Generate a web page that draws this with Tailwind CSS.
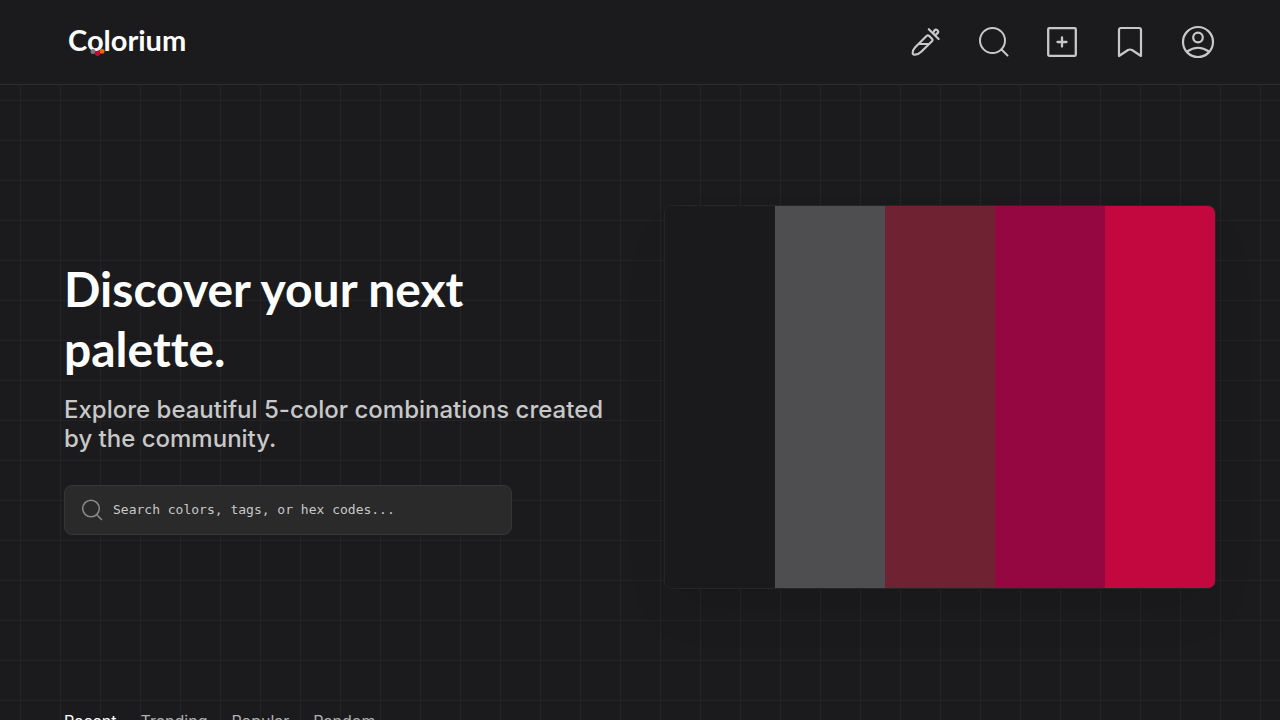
<!DOCTYPE html>
<html lang="en">
<head>
  <meta charset="UTF-8" />
  <meta name="viewport" content="width=device-width, initial-scale=1" />
  <title>Colorium</title>
  <script src="https://cdn.jsdelivr.net/npm/@tailwindcss/browser@4"></script>
</head>
<body class="min-h-screen overflow-x-hidden bg-[#1b1b1d] bg-[linear-gradient(to_right,#232325_1px,transparent_1px),linear-gradient(to_bottom,#232325_1px,transparent_1px)] bg-size-[40px_40px] bg-position-[20px_20px] font-[Inter,sans-serif] text-white">

  <!-- Header -->
  <header class="flex h-[85px] items-center justify-between border-b border-[#2d2d2f] bg-[#1b1b1d] px-16">
    <a href="#" class="relative pb-1 pl-1 font-[Lato,sans-serif] text-[29px] font-bold leading-8">
      Colorium
      <svg class="absolute left-[26px] top-6 h-2 w-4" viewBox="0 0 16 8" aria-hidden="true">
        <circle cx="3" cy="3.500" r="2.500" fill="#77777a" />
        <circle cx="12" cy="3.200" r="2.500" fill="#e8650c" />
        <circle cx="7.500" cy="5.300" r="2.600" fill="#c3073f" />
      </svg>
    </a>

    <nav class="flex items-center gap-8 text-[#c8c8c8]">
      <button aria-label="Color picker">
        <svg class="size-9" viewBox="0 0 36 36" fill="none" stroke="currentColor" stroke-width="2.200" stroke-linecap="round" stroke-linejoin="round">
          <path d="M18.500 12 7 23.500Q4.500 26 4.700 29.500Q5 31 7 30.700Q10.500 30.500 13.500 27.500L24.200 17Q25 16 24.200 15L21 11.800Q19.800 11 18.500 12Z" />
          <path d="M11 20h9.500M20.800 5.200l9.800 9.800" />
          <path d="m25 9.200 1.300-2.500q1.300-1.700 3-.5 1.700 1.500.3 3l-2.300 2" />
        </svg>
      </button>
      <button aria-label="Search">
        <svg class="size-9" viewBox="0 0 36 36" fill="none" stroke="currentColor" stroke-width="2" stroke-linecap="round">
          <circle cx="16.500" cy="16.500" r="12.500" /><path d="m25.500 25.500 6 6" />
        </svg>
      </button>
      <button aria-label="Create palette">
        <svg class="size-9" viewBox="0 0 36 36" fill="none" stroke="currentColor" stroke-width="2.300" stroke-linecap="round">
          <rect x="4.200" y="4.200" width="27.600" height="27.600" rx="1" /><path d="M18 13.500v9M13.500 18h9" />
        </svg>
      </button>
      <button aria-label="Saved palettes">
        <svg class="size-9" viewBox="0 0 36 36" fill="none" stroke="currentColor" stroke-width="2.200" stroke-linejoin="round">
          <path d="M7 32V6a2 2 0 0 1 2-2h18a2 2 0 0 1 2 2v26l-9-6q-2-1-4 0Z" />
        </svg>
      </button>
      <button aria-label="Account">
        <svg class="size-9" viewBox="0 0 36 36" fill="none" stroke="currentColor" stroke-width="2.200">
          <circle cx="18" cy="18" r="15" /><circle cx="18" cy="13.500" r="4.800" /><path d="M7 27.500q11-7.500 22 0" />
        </svg>
      </button>
    </nav>
  </header>

  <main class="px-16">
    <!-- Hero -->
    <section class="grid grid-cols-2 items-center gap-12 py-30">
      <div>
        <h1 class="mb-4 max-w-md font-[Lato,sans-serif] text-5xl font-bold leading-[60px] [font-variant-ligatures:none]">Discover your next palette.</h1>
        <p class="mb-8 text-2xl font-medium leading-[29px] text-[#c8c8c8]">Explore beautiful 5-color combinations created by the community.</p>
        <label class="flex h-[50px] max-w-md items-center gap-2 rounded-lg border border-[#363638] bg-[#2a2a2a] px-4">
          <svg class="size-6 shrink-0 text-[#8a8a8a]" viewBox="0 0 24 24" fill="none" stroke="currentColor" stroke-width="1.500" stroke-linecap="round">
            <circle cx="10" cy="10.500" r="8.300" /><path d="m16 17 4.500 4.500" />
          </svg>
          <span class="sr-only">Search</span>
          <input type="text" placeholder="Search colors, tags, or hex codes..." class="w-full font-['DejaVu_Sans_Mono',monospace] text-[13px] outline-none placeholder:text-[#c8c8c8]" />
        </label>
      </div>

      <div class="grid h-96 grid-cols-5 overflow-hidden rounded-lg border border-[#252527] shadow-[0_25px_50px_-12px_#0000001a]">
        <div class="bg-[#1a1a1c]"></div>
        <div class="bg-[#4e4e50]"></div>
        <div class="bg-[#6f2232]"></div>
        <div class="bg-[#950740]"></div>
        <div class="bg-[#c3073f]"></div>
      </div>
    </section>

    <!-- Filters -->
    <nav class="flex gap-6 pb-12 text-base leading-6 text-[#b0b0b0]">
      <button class="text-white">Recent</button>
      <button>Trending</button>
      <button>Popular</button>
      <button>Random</button>
    </nav>
  </main>
</body>
</html>
